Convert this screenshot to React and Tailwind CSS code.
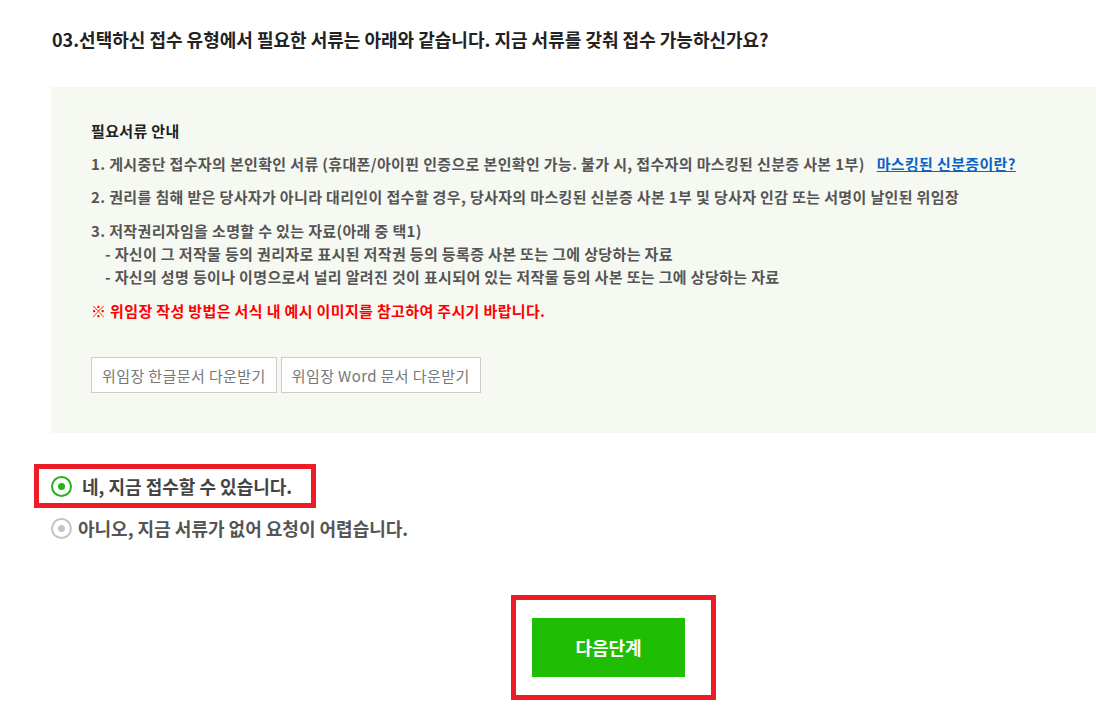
import React, { useState } from 'react';

const font = { fontFamily: '"Noto Sans CJK KR", "Noto Sans", sans-serif' };

function Radio({ checked }) {
  return (
    <span
      className={`flex h-[21px] w-[21px] shrink-0 items-center justify-center rounded-full border-2 ${
        checked ? 'border-[#22b613]' : 'border-[#c4c4c4]'
      }`}
    >
      <span className={`h-[7px] w-[7px] rounded-full ${checked ? 'bg-[#22b613]' : 'bg-[#c4c4c4]'}`} />
    </span>
  );
}

export default function App() {
  const [answer, setAnswer] = useState('yes');

  return (
    <div className="min-h-[722px] bg-white pt-[26px]" style={font}>
      <h2 className="ml-[52px] text-[18px] font-bold leading-[27px] text-[#222]">
        03.선택하신 접수 유형에서 필요한 서류는 아래와 같습니다. 지금 서류를 갖춰 접수 가능하신가요?
      </h2>

      <div className="ml-[51px] mt-[34px] bg-[#f5f9f2] pb-[40px] pl-[40px] pt-[32px] text-[15px] font-bold leading-[23px] tracking-[0.35px] text-[#555]">
        <p className="text-[#222]">필요서류 안내</p>
        <p className="mt-[10px]">
          1. 게시중단 접수자의 본인확인 서류 (휴대폰/아이핀 인증으로 본인확인 가능. 불가 시, 접수자의 마스킹된 신분증 사본 1부)
          <a href="#" className="ml-[12px] text-[#0b63c7] underline">
            마스킹된 신분증이란?
          </a>
        </p>
        <p className="mt-[10px]">
          2. 권리를 침해 받은 당사자가 아니라 대리인이 접수할 경우, 당사자의 마스킹된 신분증 사본 1부 및 당사자 인감 또는 서명이 날인된 위임장
        </p>
        <div className="mt-[11px]">
          <p>3. 저작권리자임을 소명할 수 있는 자료(아래 중 택1)</p>
          <p className="pl-[14px]">- 자신이 그 저작물 등의 권리자로 표시된 저작권 등의 등록증 사본 또는 그에 상당하는 자료</p>
          <p className="pl-[14px]">- 자신의 성명 등이나 이명으로서 널리 알려진 것이 표시되어 있는 저작물 등의 사본 또는 그에 상당하는 자료</p>
        </div>
        <p className="mt-[11px] text-[#ff0000]">※ 위임장 작성 방법은 서식 내 예시 이미지를 참고하여 주시기 바랍니다.</p>
        <div className="mt-[35px] flex gap-[4px]">
          <button className="h-[36px] border border-[#cccccc] bg-white px-[10px] text-[15px] font-normal tracking-[0.4px] text-[#777]">
            위임장 한글문서 다운받기
          </button>
          <button className="h-[36px] border border-[#cccccc] bg-white px-[10px] text-[15px] font-normal tracking-[0.4px] text-[#777]">
            위임장 Word 문서 다운받기
          </button>
        </div>
      </div>

      <div className="ml-[34px] mt-[31px] flex flex-col">
        <button
          onClick={() => setAnswer('yes')}
          className="flex h-[44px] w-[282px] items-center gap-[10px] border-[5px] border-[#ee1c25] pl-[12px] text-left"
        >
          <Radio checked={answer === 'yes'} />
          <span className="text-[18px] font-bold text-[#444]">네, 지금 접수할 수 있습니다.</span>
        </button>
        <button onClick={() => setAnswer('no')} className="mt-[4px] flex items-center gap-[6px] pl-[17px] text-left">
          <Radio checked={answer === 'no'} />
          <span className="text-[18px] font-bold leading-[32px] text-[#555]">
            아니오, 지금 서류가 없어 요청이 어렵습니다.
          </span>
        </button>
      </div>

      <div className="ml-[511px] mt-[51px] w-[205px] border-[5px] border-[#ee1c25] px-[16px] py-[18px]">
        <button className="h-[59px] w-[153px] bg-[#1fbd04] text-[18px] font-bold text-white">다음단계</button>
      </div>
    </div>
  );
}
